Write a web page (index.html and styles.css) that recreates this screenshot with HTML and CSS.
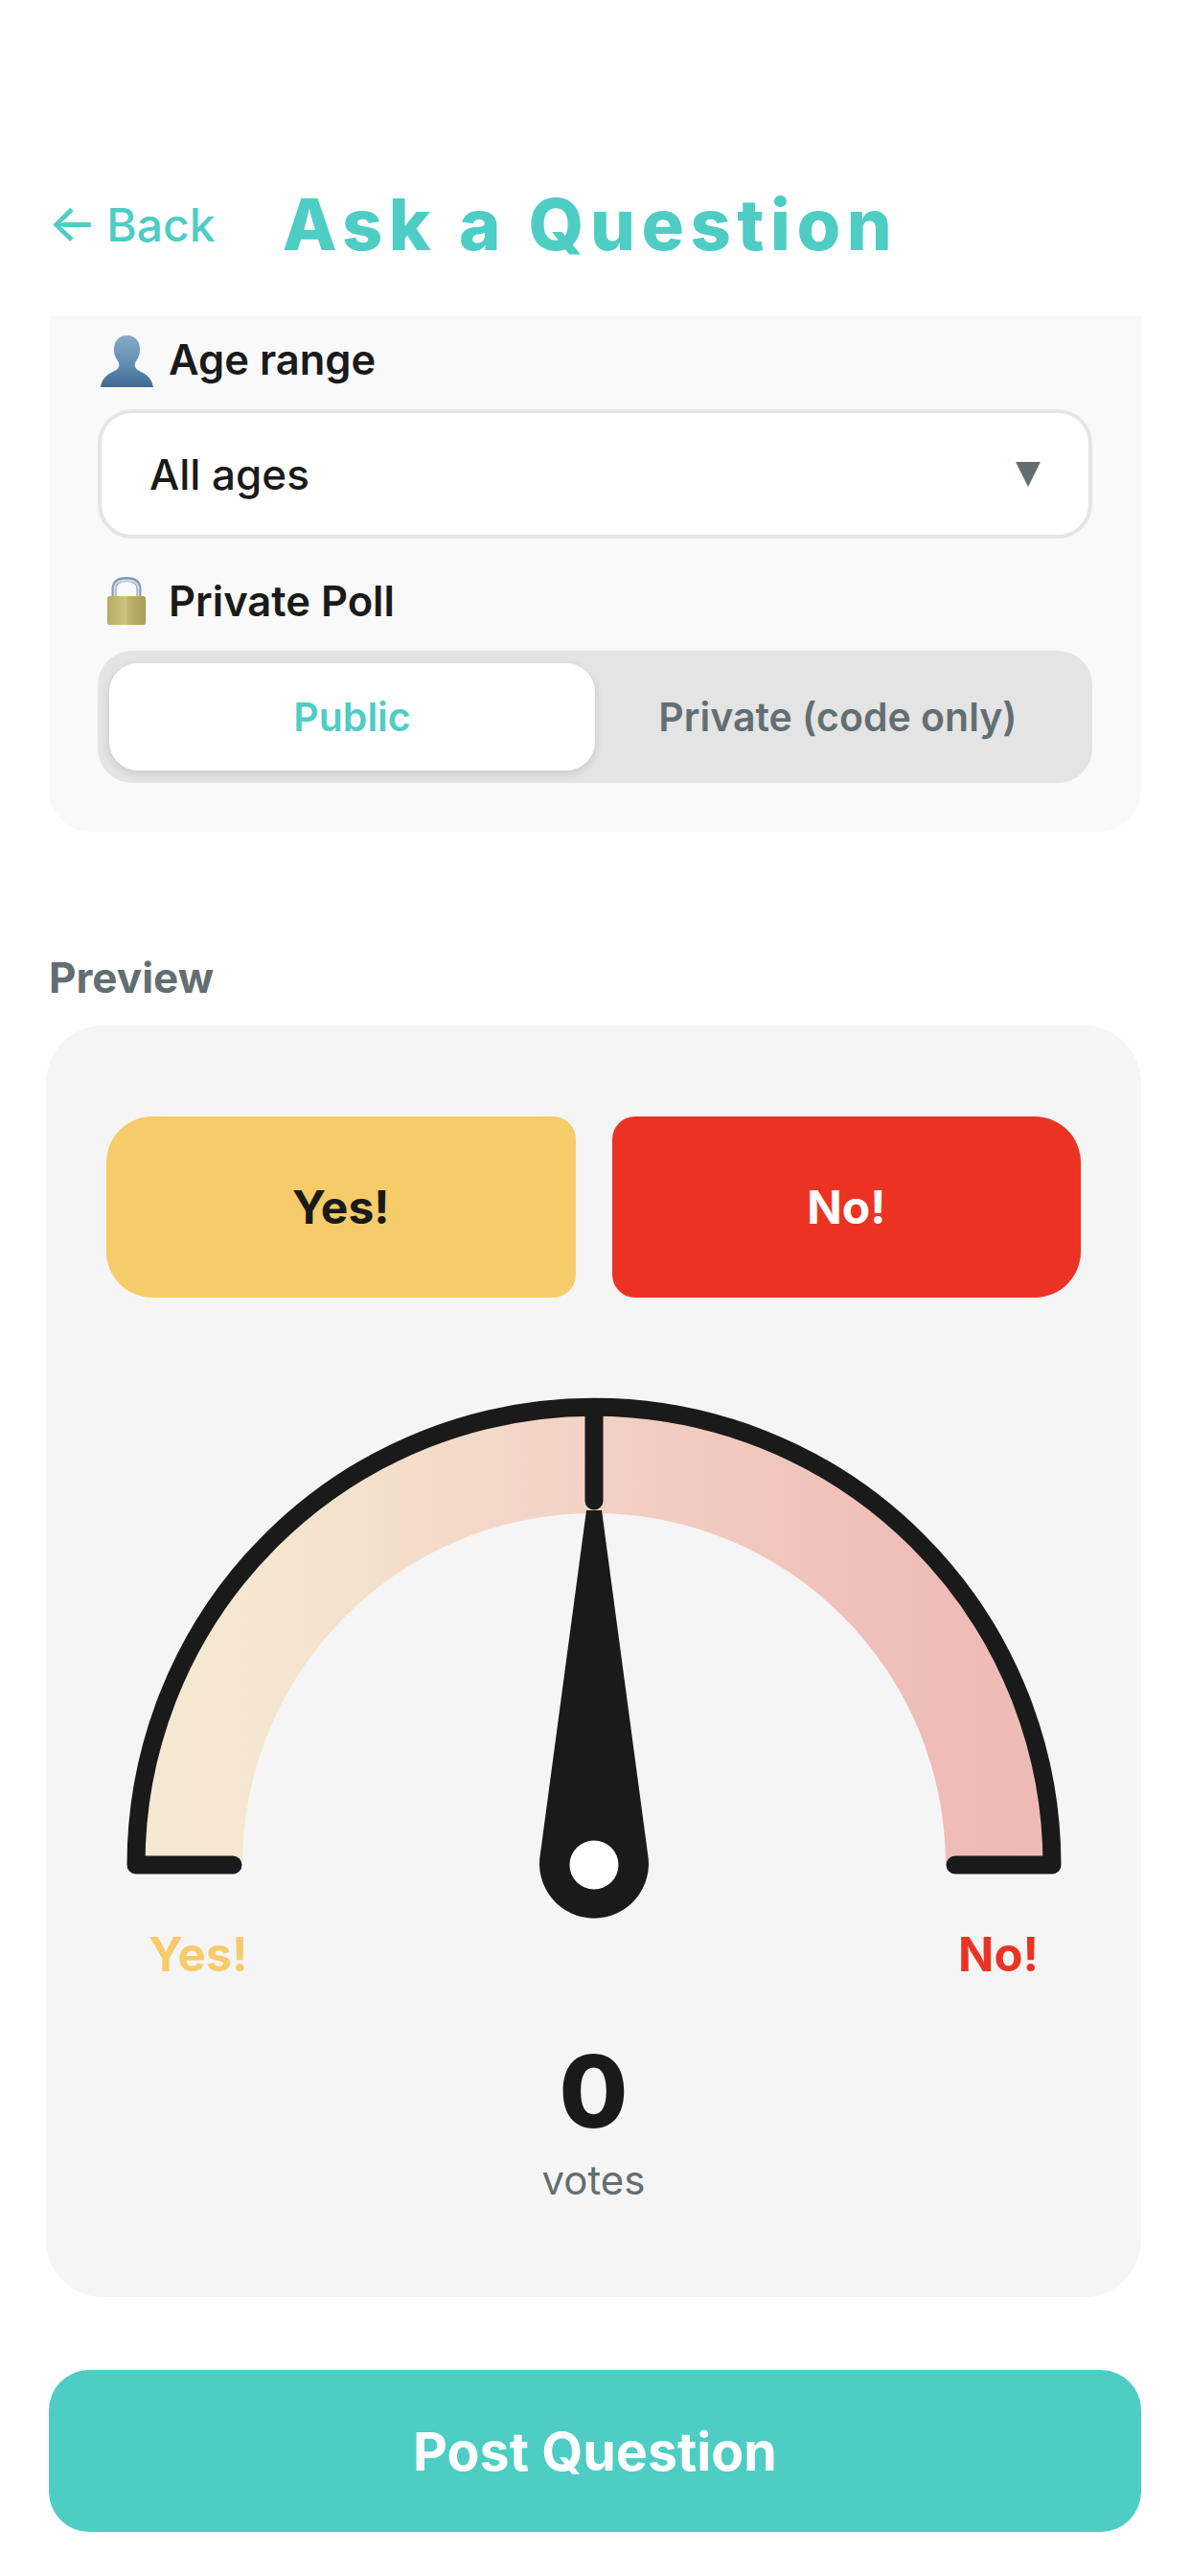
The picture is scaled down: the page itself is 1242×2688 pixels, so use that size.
FILE: index.html
```html
<!DOCTYPE html>
<html lang="en">
<head>
    <meta charset="UTF-8">
    <meta name="viewport" content="width=device-width, initial-scale=1.0">
    <title>Ask a Question</title>
    <link rel="stylesheet" href="styles.css">
</head>
<body>
    <header class="top-bar">
        <a class="back-link"><span class="back-arrow">←</span> Back</a>
        <h1 class="page-title">Ask a Question</h1>
    </header>
    <main>
        <section class="form-card">
            <div class="field-label field-label-age">
                <svg class="emoji emoji-person" viewBox="0 0 55 54">
                    <defs>
                        <linearGradient id="bust" x1="0" y1="0" x2="0" y2="1">
                            <stop offset="0" stop-color="#84a9c8"/>
                            <stop offset="0.6" stop-color="#5f8bb0"/>
                            <stop offset="1" stop-color="#416a92"/>
                        </linearGradient>
                    </defs>
                    <path fill="url(#bust)" d="M27.500 0C37 0 41.500 7 41 16C40.700 21 39 24 36.500 27.500C35 30 35.500 33.500 38 35.500C43 39 53 41 55 54H0C2 41 12 39 17 35.500C19.500 33.500 20 30 18.500 27.500C16 24 14.300 21 14 16C13.500 7 18 0 27.500 0Z"/>
                </svg>
                <span>Age range</span>
            </div>
            <div class="select-box">
                <span>All ages</span>
                <span class="select-caret"></span>
            </div>
            <div class="field-label field-label-private">
                <svg class="emoji emoji-lock" viewBox="0 0 40 50">
                    <defs>
                        <linearGradient id="lockBody" x1="0" y1="0" x2="1" y2="0">
                            <stop offset="0" stop-color="#b5aa60"/>
                            <stop offset="0.5" stop-color="#d0c581"/>
                            <stop offset="0.52" stop-color="#c2b66e"/>
                            <stop offset="1" stop-color="#a99c52"/>
                        </linearGradient>
                    </defs>
                    <path d="M7 22V13C7 5 13 2.500 20 2.500C27 2.500 33 5 33 13V22" fill="none" stroke="#8099ba" stroke-width="5"/>
                    <path d="M7.500 22V13C7.500 6 13 3.500 20 3.500C27 3.500 32.500 6 32.500 13V22" fill="none" stroke="#d5dde6" stroke-width="2"/>
                    <rect x="0" y="20" width="40" height="30" rx="2.500" fill="url(#lockBody)"/>
                </svg>
                <span>Private Poll</span>
            </div>
            <div class="segmented">
                <div class="segment segment-active">Public</div>
                <div class="segment">Private (code only)</div>
            </div>
        </section>

        <h2 class="section-title">Preview</h2>
        <section class="preview-card">
            <div class="vote-buttons">
                <div class="vote-btn vote-yes">Yes!</div>
                <div class="vote-btn vote-no">No!</div>
            </div>
            <svg class="gauge" viewBox="0 0 1017 556">
                <defs>
                    <linearGradient id="gaugeFill" gradientUnits="userSpaceOnUse" x1="21" y1="0" x2="997" y2="0">
                        <stop offset="0" stop-color="#f5e9d2"/>
                        <stop offset="0.15" stop-color="#f5e6d0"/>
                        <stop offset="0.5" stop-color="#f2d1c3"/>
                        <stop offset="0.85" stop-color="#efbdb8"/>
                        <stop offset="1" stop-color="#eeb9b5"/>
                    </linearGradient>
                </defs>
                <path fill="url(#gaugeFill)" d="M31 496A478 478 0 0 1 987 496H876A367 367 0 0 0 142 496Z"/>
                <path fill="none" stroke="#1a1a1a" stroke-width="19" stroke-linecap="round" stroke-linejoin="round" d="M132 496H31A478 478 0 0 1 987 496H886"/>
                <path stroke="#1a1a1a" stroke-width="19" stroke-linecap="round" d="M509 20V116"/>
                <path fill="#1a1a1a" d="M501 126H517L565 484A57 57 0 1 1 453 484Z"/>
                <circle cx="509" cy="496" r="25.500" fill="#fff"/>
            </svg>
            <div class="gauge-labels">
                <span class="label-yes">Yes!</span>
                <span class="label-no">No!</span>
            </div>
            <div class="vote-count">0</div>
            <div class="vote-caption">votes</div>
        </section>

        <button class="post-btn">Post Question</button>
    </main>
</body>
</html>
```

FILE: styles.css
```css
* {
    box-sizing: border-box;
}

body {
    margin: 0;
    height: 2688px;
    background-color: #fff;
    font-family: Inter, "Liberation Sans", sans-serif;
    color: #1a1a1a;
    overflow: hidden;
}

.top-bar {
    display: flex;
    align-items: center;
    height: 330px;
    padding: 188px 51px 50px 50px;
    color: #4ecdc4;
}

.back-link {
    font-size: 48px;
    font-weight: 500;
    white-space: nowrap;
}

.back-arrow {
    margin-right: -3px;
    font-size: 54px;
    font-weight: 500;
    line-height: 48px;
}

.page-title {
    margin: 0 0 0 70px;
    font-size: 74px;
    font-weight: 800;
    letter-spacing: 6.500px;
    white-space: nowrap;
}

main {
    padding: 0 51px;
}

.form-card {
    height: 538px;
    padding: 15px 51px 0;
    background-color: #f9f9f9;
    border-radius: 0 0 44px 44px;
}

.field-label {
    display: flex;
    align-items: center;
    height: 60px;
    font-size: 43.500px;
    font-weight: 600;
}

.emoji {
    display: block;
    flex: none;
}

.emoji-person {
    width: 55px;
    height: 54px;
    margin: 3px 16px 0 3px;
}

.emoji-lock {
    width: 40px;
    height: 50px;
    margin: 0 24px 0 10px;
}

.select-box {
    display: flex;
    align-items: center;
    justify-content: space-between;
    height: 135px;
    margin-top: 22px;
    padding: 0 50px 0 50px;
    background-color: #fff;
    border: 4px solid #e5e5e5;
    border-radius: 36px;
    font-size: 44px;
    font-weight: 500;
}

.select-caret {
    width: 0;
    height: 0;
    border-left: 13px solid transparent;
    border-right: 13px solid transparent;
    border-top: 26px solid #636e72;
}

.field-label-private {
    margin-top: 35px;
}

.segmented {
    display: flex;
    height: 138px;
    margin-top: 22px;
    padding: 13px 12px;
    background-color: #e4e4e4;
    border-radius: 36px;
    font-size: 41px;
    font-weight: 600;
    color: #636e72;
}

.segment {
    flex: 1;
    display: flex;
    align-items: center;
    justify-content: center;
}

.segment-active {
    background-color: #fff;
    border-radius: 30px;
    color: #4ecdc4;
    box-shadow: 0 3px 10px rgba(0, 0, 0, 0.12);
}

.section-title {
    margin: 126px 0 0;
    height: 76px;
    font-size: 44px;
    font-weight: 700;
    line-height: 52px;
    color: #636e72;
}

.preview-card {
    height: 1327px;
    margin-left: -3px;
    padding: 95px 63px 0;
    background-color: #f5f5f5;
    border-radius: 60px;
}

.vote-buttons {
    display: flex;
    gap: 38px;
}

.vote-btn {
    flex: 1;
    display: flex;
    align-items: center;
    justify-content: center;
    height: 189px;
    font-size: 48px;
    font-weight: 700;
}

.vote-yes {
    background-color: #f6cb6a;
    border-radius: 48px 24px 24px 48px;
}

.vote-no {
    background-color: #ec3323;
    border-radius: 24px 48px 48px 24px;
    color: #fff;
}

.gauge {
    display: block;
    width: 1017px;
    height: 556px;
    margin-top: 96px;
}

.gauge-labels {
    display: flex;
    justify-content: space-between;
    margin-top: 5px;
    padding: 0 44px 0 44px;
    font-size: 49px;
    font-weight: 700;
    line-height: 58px;
}

.label-yes {
    color: #f6cb6a;
}

.label-no {
    color: #ec3323;
}

.vote-count {
    margin-top: 53px;
    font-size: 104px;
    font-weight: 800;
    line-height: 120px;
    text-align: center;
}

.vote-caption {
    margin-top: 8px;
    font-size: 42px;
    line-height: 50px;
    text-align: center;
    color: #636e72;
}

.post-btn {
    display: block;
    width: 100%;
    height: 169px;
    margin-top: 76px;
    background-color: #4ecdc4;
    border: none;
    border-radius: 42px;
    color: #fff;
    font-family: inherit;
    font-size: 55.500px;
    font-weight: 700;
}
```
